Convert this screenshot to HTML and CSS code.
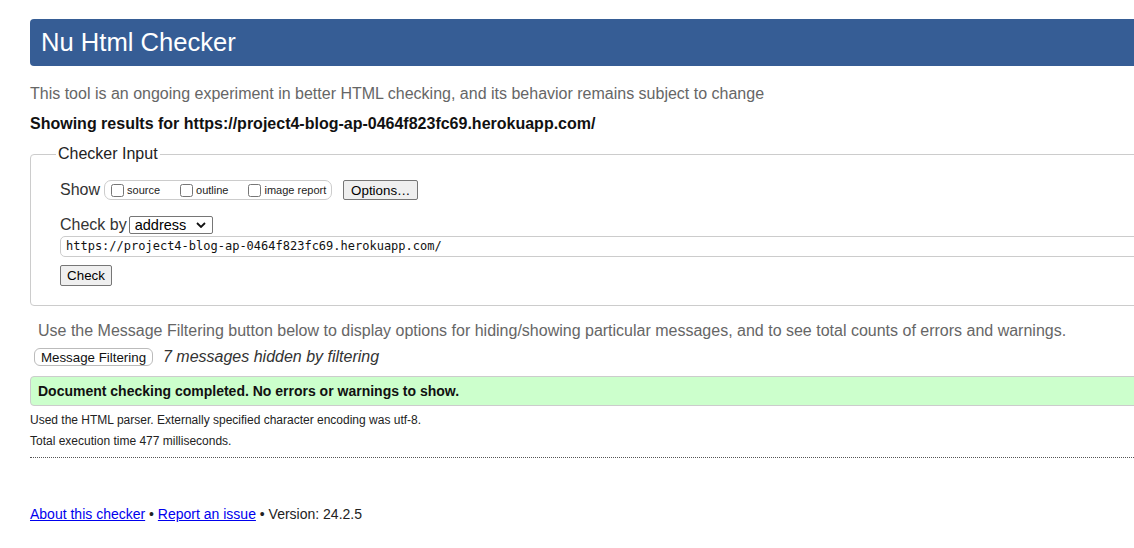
FILE: index.html
```html
<!DOCTYPE html>
<html lang="en">
<head>
<meta charset="utf-8">
<title>Nu Html Checker</title>
<link rel="stylesheet" href="styles.css">
</head>
<body>
<div class="page">
  <h1 class="title">Nu Html Checker</h1>
  <p class="tagline">This tool is an ongoing experiment in better HTML checking, and its behavior remains subject to change</p>
  <p class="showing">Showing results for https://project4-blog-ap-0464f823fc69.herokuapp.com/</p>

  <fieldset class="checker">
    <legend class="legend">Checker Input</legend>
    <div class="row show-row">
      <span class="row-label">Show</span>
      <span class="show-group">
        <label class="opt opt-source"><input type="checkbox" class="cb">source</label>
        <label class="opt opt-outline"><input type="checkbox" class="cb">outline</label>
        <label class="opt"><input type="checkbox" class="cb">image report</label>
      </span>
      <button class="btn btn-options" type="button">Options…</button>
    </div>
    <div class="row by-row">
      <span class="row-label">Check by</span>
      <span class="select"><span class="select-text">address</span><svg class="chev" width="10" height="6" viewBox="0 0 10 6"><path d="M1 1 L5 5 L9 1" fill="none" stroke="#111" stroke-width="1.8"/></svg></span>
    </div>
    <div class="url">https://project4-blog-ap-0464f823fc69.herokuapp.com/</div>
    <div class="row check-row">
      <button class="btn btn-check" type="button">Check</button>
    </div>
  </fieldset>

  <p class="filter-note">Use the Message Filtering button below to display options for hiding/showing particular messages, and to see total counts of errors and warnings.</p>
  <div class="filter-row">
    <button class="btn-filter" type="button">Message Filtering</button>
    <span class="hidden-note">7 messages hidden by filtering</span>
  </div>

  <div class="success">Document checking completed. No errors or warnings to show.</div>

  <p class="small">Used the HTML parser. Externally specified character encoding was utf-8.</p>
  <p class="small">Total execution time 477 milliseconds.</p>
  <div class="dotted"></div>

  <p class="footer"><a href="#" class="link">About this checker</a> • <a href="#" class="link">Report an issue</a> • Version: 24.2.5</p>
</div>
</body>
</html>
```

FILE: styles.css
```css
html, body {
  margin: 0;
  padding: 0;
  overflow: hidden;
  background: #fff;
}
body {
  font-family: "Liberation Sans", Arial, sans-serif;
  color: #222;
}
.page {
  margin: 0 -40px 0 30px;
  padding-top: 19px;
}
.title {
  margin: 0;
  height: 47px;
  line-height: 47px;
  padding-left: 11px;
  background: #365d95;
  color: #fff;
  font-size: 25.6px;
  font-weight: normal;
  border-radius: 4px 0 0 4px;
}
.tagline {
  margin: 19px 0 0 0;
  font-size: 16px;
  line-height: 18px;
  color: #666;
}
.showing {
  margin: 12px 0 0 0;
  font-size: 16px;
  line-height: 18px;
  font-weight: bold;
  color: #111;
}
.checker {
  margin: 12px 0 0 0;
  padding: 0 28px 19px 29px;
  border: 1px solid #ccc;
  border-radius: 4px 0 0 4px;
  min-width: 0;
}
.legend {
  padding: 0 2px;
  margin-left: -4px;
  font-size: 16px;
  line-height: 18px;
  color: #222;
}
.row {
  display: flex;
  align-items: center;
}
.show-row {
  margin-top: 16px;
  height: 22px;
}
.row-label {
  font-size: 16px;
  color: #333;
}
.show-group {
  display: inline-flex;
  align-items: center;
  margin-left: 4px;
  height: 18px;
  padding: 0 5px 0 3px;
  border: 1px solid #ccc;
  border-radius: 7px;
}
.opt {
  display: inline-flex;
  align-items: center;
  font-size: 11px;
  color: #222;
}
.opt-source { margin-right: 17px; }
.opt-outline { margin-right: 17px; }
.cb {
  margin: 0 3px 0 3px;
  width: 13px;
  height: 13px;
}
.btn {
  font-family: "Liberation Sans", Arial, sans-serif;
  font-size: 13.33px;
  color: #000;
  background: #efefef;
  border: 1px solid #767676;
  border-radius: 2px;
  padding: 0 6px;
}
.btn-options {
  margin-left: 11px;
  width: 75px;
  height: 20px;
}
.by-row {
  margin-top: 15px;
  height: 18px;
}
.select {
  display: inline-flex;
  align-items: center;
  justify-content: space-between;
  margin-left: 2px;
  width: 84px;
  height: 18px;
  box-sizing: border-box;
  border: 1px solid #767676;
  border-radius: 2px;
  padding: 0 6px 0 5px;
  font-size: 14.5px;
  color: #000;
}
.url {
  margin-top: 2px;
  height: 21px;
  box-sizing: border-box;
  border: 1px solid #ccc;
  border-radius: 5px 0 0 5px;
  padding-left: 5px;
  font-family: "DejaVu Sans Mono", "Liberation Mono", monospace;
  font-size: 12px;
  line-height: 19px;
  color: #111;
}
.check-row {
  margin-top: 8px;
}
.btn-check {
  width: 52px;
  height: 21px;
}
.filter-note {
  margin: 16px 0 0 8px;
  font-size: 16px;
  line-height: 18px;
  color: #666;
}
.filter-row {
  display: flex;
  align-items: center;
  margin-top: 6px;
  height: 22px;
}
.btn-filter {
  margin-left: 4px;
  width: 119px;
  height: 18px;
  padding: 0;
  font-family: "Liberation Sans", Arial, sans-serif;
  font-size: 13.33px;
  color: #111;
  background: #fff;
  border: 1px solid #bbb;
  border-radius: 6px;
}
.hidden-note {
  margin-left: 10px;
  font-size: 16px;
  font-style: italic;
  color: #333;
}
.success {
  margin-top: 8px;
  height: 30px;
  box-sizing: border-box;
  padding-left: 7px;
  line-height: 28px;
  background: #ccffcc;
  border: 1px solid #ccc;
  border-radius: 4px 0 0 4px;
  font-size: 14px;
  font-weight: bold;
  color: #111;
}
.small {
  margin: 7px 0 0 0;
  font-size: 12px;
  line-height: 14px;
  color: #222;
}
.dotted {
  margin-top: 9px;
  border-top: 1px dotted #555;
}
.footer {
  margin: 48px 0 0 0;
  font-size: 14px;
  line-height: 16px;
  color: #222;
}
.link {
  color: #0000ee;
}
```
